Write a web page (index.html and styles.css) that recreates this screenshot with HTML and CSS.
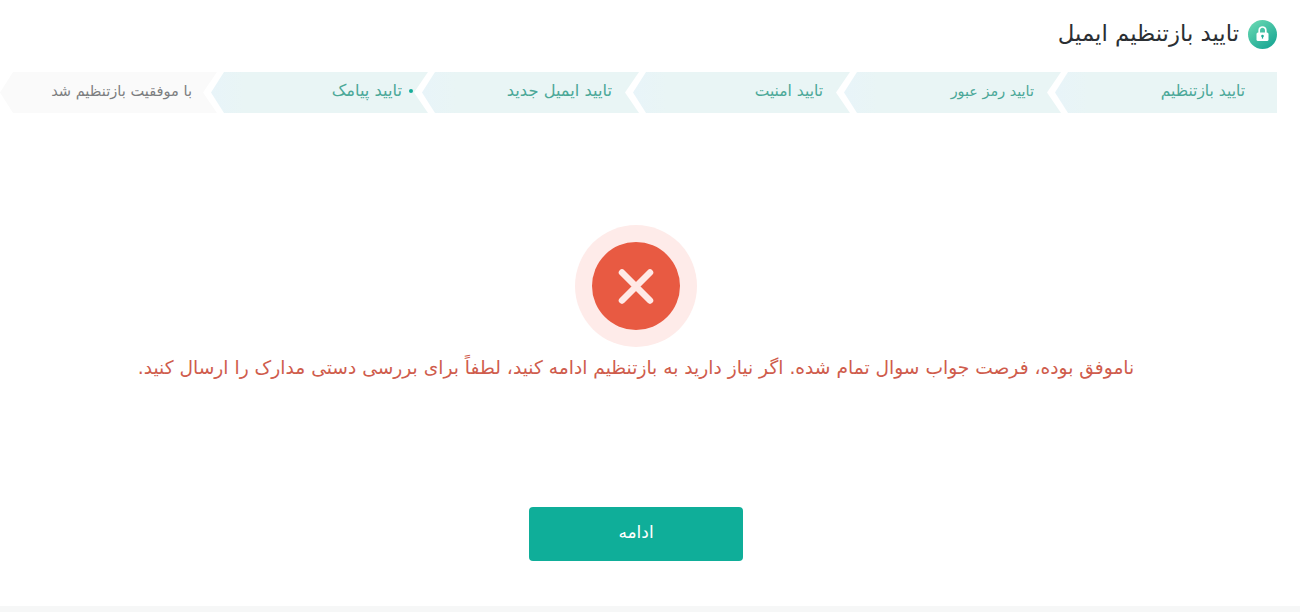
FILE: index.html
```html
<!DOCTYPE html>
<html lang="fa" dir="rtl">
<head>
<meta charset="utf-8">
<title>تایید بازتنظیم ایمیل</title>
<link rel="stylesheet" href="styles.css">
</head>
<body>
<div class="page">
  <header class="title-row">
    <span class="lock">
      <svg width="15" height="16" viewBox="0 0 15 16" aria-hidden="true">
        <path d="M4.200 7V4.300a3.300 3.300 0 0 1 6.600 0V7" fill="none" stroke="#fff" stroke-width="1.700"/>
        <rect x="1.500" y="6.500" width="12" height="8.500" rx="1.500" fill="#fff"/>
        <circle cx="7.500" cy="10" r="1.300" fill="#1fae98"/>
        <rect x="6.900" y="10" width="1.200" height="2.600" fill="#1fae98"/>
      </svg>
    </span>
    <h1 class="title">تایید بازتنظیم ایمیل</h1>
  </header>
  <ol class="steps">
    <li class="step first"><span>تایید بازتنظیم</span></li>
    <li class="step narrow"><span>تایید رمز عبور</span></li>
    <li class="step"><span>تایید امنیت</span></li>
    <li class="step wide"><span>تایید ایمیل جدید</span></li>
    <li class="step current wide"><i class="dot"></i><span>تایید پیامک</span></li>
    <li class="step pending"><span>با موفقیت بازتنظیم شد</span></li>
  </ol>
  <section class="result">
    <div class="halo">
      <div class="badge">
        <svg width="38" height="38" viewBox="0 0 38 38" aria-hidden="true">
          <path d="M5 5.500L33 33.500M33 5.500L5 33.500" stroke="#ffe9e6" stroke-width="6.500" stroke-linecap="round" fill="none"/>
        </svg>
      </div>
    </div>
    <p class="message">ناموفق بوده، فرصت جواب سوال تمام شده. اگر نیاز دارید به بازتنظیم ادامه کنید، لطفاً برای بررسی دستی مدارک را ارسال کنید.</p>
    <button class="continue" type="button">ادامه</button>
  </section>
</div>
<footer class="strip"></footer>
</body>
</html>
```
FILE: styles.css
```css
* { box-sizing: border-box; }
html, body { margin: 0; height: 612px; overflow: hidden; }
body {
  background: #fff;
  font-family: "DejaVu Sans", "Noto Sans", sans-serif;
  display: flex;
  flex-direction: column;
}
.page { flex: 1; padding-right: 23px; }
.title-row {
  display: flex;
  align-items: center;
  gap: 9px;
  height: 72px;
  padding-bottom: 4px;
}
.lock {
  width: 29px;
  height: 29px;
  border-radius: 50%;
  background: linear-gradient(145deg, #6fdcb4, #0fa090);
  display: flex;
  align-items: center;
  justify-content: center;
}
.title {
  margin: 0;
  font-size: 22.800px;
  line-height: 26px;
  font-weight: 400;
  color: #2b2f33;
  position: relative;
  top: -1px;
}
.steps {
  display: flex;
  list-style: none;
  margin: 0;
  padding: 0;
  height: 41px;
}
.step {
  flex: 0 0 222px;
  margin-left: -11px;
  padding: 0 32px 4px 0;
  display: flex;
  align-items: center;
  font-size: 15.500px;
  color: #4ba898;
  background: linear-gradient(to left, #e9f5f5 85%, #e8f4f9);
  clip-path: polygon(13px 0, calc(100% - 5px) 0, calc(100% - 19px) 50%, calc(100% - 5px) 100%, 13px 100%, 0 50%);
}
.step.first { clip-path: polygon(13px 0, 100% 0, 100% 100%, 13px 100%, 0 50%); }
.step.narrow { font-size: 14.400px; }
.step.wide { font-size: 16.300px; }
.step.current { padding-right: 20px; gap: 7px; }
.dot {
  width: 4px;
  height: 4px;
  border-radius: 50%;
  background: #17ad9a;
}
.step.pending {
  margin-left: 0;
  padding-right: 30px;
  font-size: 14.600px;
  background: #fafafa;
  color: #7c7e80;
}
.result {
  display: flex;
  flex-direction: column;
  align-items: center;
  padding: 112px 5px 0 0;
}
.halo {
  width: 122px;
  height: 122px;
  border-radius: 50%;
  background: #feebe9;
  display: flex;
  align-items: center;
  justify-content: center;
}
.badge {
  width: 88px;
  height: 88px;
  border-radius: 50%;
  background: #e85a42;
  display: flex;
  align-items: center;
  justify-content: center;
}
.message {
  margin: 8px 0 0;
  height: 26px;
  line-height: 26px;
  font-size: 18.650px;
  color: #cf5c4c;
  white-space: nowrap;
}
.continue {
  margin-top: 126px;
  width: 214px;
  height: 54px;
  border: 0;
  border-radius: 4px;
  background: #0fae99;
  color: #fff;
  padding: 0 0 4px;
  font: 400 17px "DejaVu Sans", "Noto Sans", sans-serif;
}
.strip { height: 6px; background: #f6f7f7; }
```
